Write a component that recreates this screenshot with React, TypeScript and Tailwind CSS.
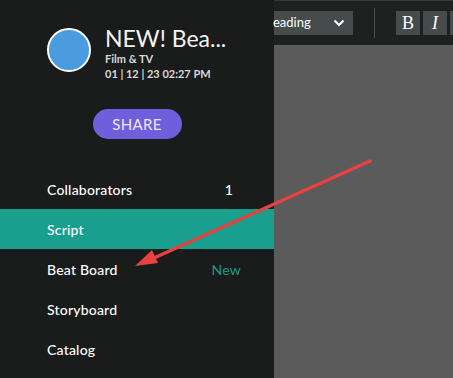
const font = { fontFamily: 'Lato, "Noto Sans", sans-serif' }

const items: Array<{ name: string; extra?: string; extraClass?: string; active?: boolean }> = [
  { name: 'Collaborators', extra: '1', extraClass: 'text-white pr-[41px]' },
  { name: 'Script', active: true },
  { name: 'Beat Board', extra: 'New', extraClass: 'text-[#1a9a88] font-normal pr-[33px]' },
  { name: 'Storyboard' },
  { name: 'Catalog' },
]

function Sidebar() {
  return (
    <aside className="flex w-[274px] shrink-0 flex-col bg-[#1a1b1b]">
      <div className="flex items-start pl-[47px] pt-[25px]">
        <div className="mt-[3px] h-[44px] w-[44px] shrink-0 rounded-full border-2 border-white bg-[#4a9be0]" />
        <div className="ml-[14px] flex flex-col">
          <div className="text-[23px] leading-[26px] text-[#f4f4f4]">NEW! Bea...</div>
          <div className="mt-[1px] text-[11px] font-bold leading-[14px] text-[#d8d8d8]">Film &amp; TV</div>
          <div className="mt-[1px] text-[11px] font-bold leading-[14px] text-[#d8d8d8]">01 | 12 | 23 02:27 PM</div>
        </div>
      </div>
      <div className="mt-[28px] flex justify-center">
        <button className="h-[30px] w-[89px] rounded-full bg-[#6f5fdc] text-[15px] tracking-wide text-[#ece8ff]">
          SHARE
        </button>
      </div>
      <nav className="mt-[30px] flex flex-col">
        {items.map((it) => (
          <div
            key={it.name}
            className={`flex h-[40px] items-center justify-between pl-[47px] text-[14px] font-medium tracking-[0.2px] text-white ${
              it.active ? 'bg-[#189f8e]' : ''
            }`}
          >
            <span>{it.name}</span>
            {it.extra && <span className={`text-[14px] ${it.extraClass}`}>{it.extra}</span>}
          </div>
        ))}
      </nav>
    </aside>
  )
}

function Toolbar() {
  return (
    <div className="flex h-[45px] items-center border-t border-[#363838] bg-[#1f2120]">
      <div className="flex h-[24px] w-[79px] items-center justify-between bg-[#464b4b] pr-[8px] text-[13px] text-white">
        <span className="-ml-[1px]">eading</span>
        <svg width="12" height="8" viewBox="0 0 12 8" fill="none" stroke="white" strokeWidth="2">
          <path d="M1.5 1.5 L6 6 L10.5 1.5" />
        </svg>
      </div>
      <div className="ml-[21px] h-[30px] w-px bg-[#4a4d4d]" />
      <div className="ml-[21px] flex gap-[3px]">
        <div className="flex h-[24px] w-[24px] items-center justify-center bg-[#464b4b] text-[18px] text-white" style={{ fontFamily: '"Liberation Serif", serif' }}>
          B
        </div>
        <div className="flex h-[24px] w-[24px] items-center justify-center bg-[#464b4b] text-[18px] italic text-white" style={{ fontFamily: '"Liberation Serif", serif' }}>
          I
        </div>
        <div className="h-[24px] w-[24px] bg-[#464b4b]" />
      </div>
    </div>
  )
}

export default function App() {
  return (
    <div className="relative flex h-[378px] w-[453px] overflow-hidden" style={font}>
      <Sidebar />
      <div className="flex flex-1 flex-col bg-[#5b5b5b]">
        <Toolbar />
      </div>
      <svg className="pointer-events-none absolute left-0 top-0" width="453" height="378">
        <line x1="370" y1="161" x2="145" y2="262" stroke="#e84141" strokeWidth="3.5" strokeLinecap="round" />
        <polygon points="135,266 152,250 158,263" fill="#e84141" />
      </svg>
    </div>
  )
}
